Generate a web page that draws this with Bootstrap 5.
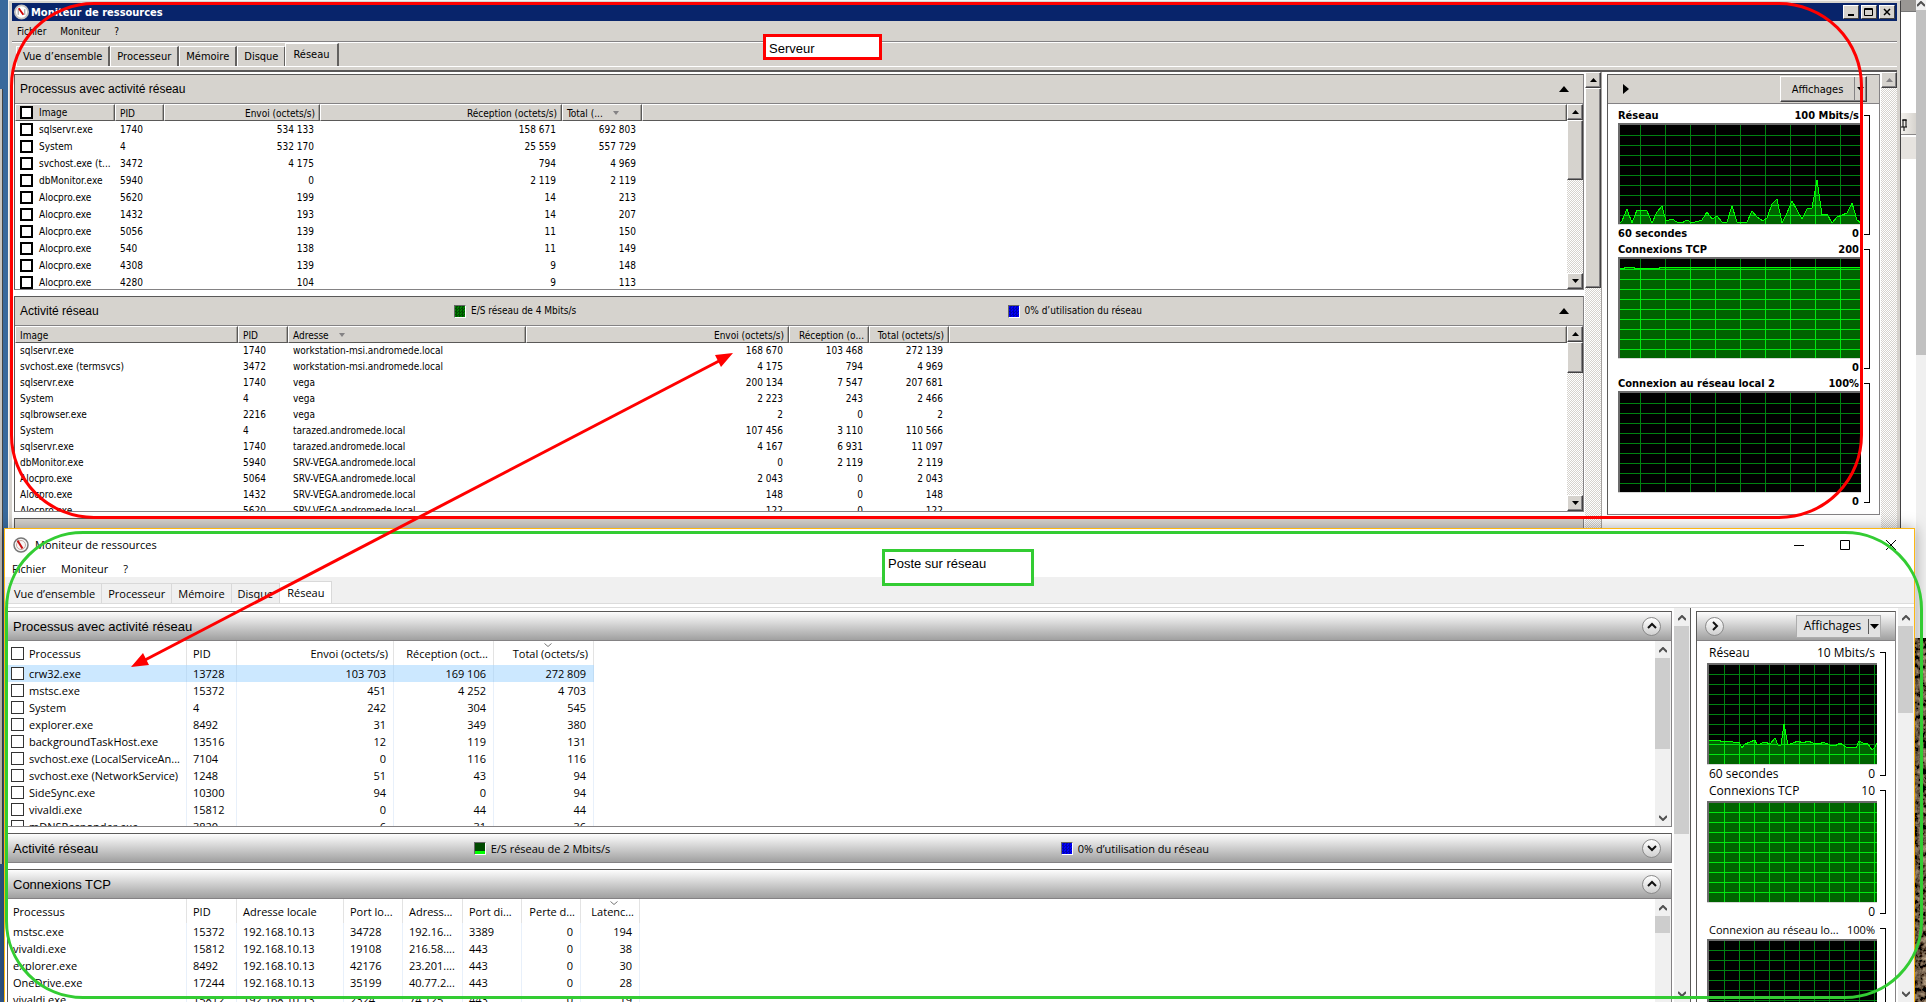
<!DOCTYPE html>
<html lang="fr">
<head>
<meta charset="utf-8">
<meta name="viewport" content="width=device-width, initial-scale=1">
<title>Moniteur de ressources</title>
<link href="https://cdn.jsdelivr.net/npm/bootstrap@5.3.0/dist/css/bootstrap.min.css" rel="stylesheet">
<style>
:root{--face:#d6d3ce;--dk:#424142;--md:#848284}
html,body{height:100%}
body{margin:0;overflow:hidden;line-height:1;color:#000;background:#fff}
button{font:inherit;color:inherit;padding:0;border:0;background:none;line-height:1}
a{color:#000;text-decoration:none}
svg{display:block}
.desk{min-height:100vh;overflow:hidden;background:linear-gradient(#39699c 0 528px,#31598c 528px)}
.deskedge{left:0;top:89px;width:3px;height:775px;background:#c8c5c0;border-right:1px solid #444}
.sidebar-bit{top:0;bottom:0;right:0;width:25px;background:#fff}
.sb-top{height:12px;background:#9a9794;width:15px;border-bottom:1px solid #777}
.sb-pin{top:113px;left:0;width:15px;height:22px;background:linear-gradient(90deg,#f4f2ee,#d6d3ce);border-bottom:1px solid #8a8888}
.sb-row{top:137px;left:0;width:15px;height:22px;background:#e6e3df}
.sb-bar{top:0;right:0;width:10px;height:638px;background:#f0f0f0}
.sb-bar svg{margin:1px 0 0 1px}
.sb-bar i{display:block;height:345px;margin-top:3px;background:#c1c1c1}
.photo{top:638px;bottom:0;right:0;width:12px;background:#2a1d13}
/* windows */
.w-srv{left:8px;right:25px;top:0;height:529px;background:var(--face);border:1px solid #f4f2ee;border-right-color:#424142;padding:2px 3px 0;font:10px/1 "DejaVu Sans Condensed","DejaVu Sans",sans-serif}
.w-cli{left:4px;right:11px;top:528px;bottom:0;background:#fff;border:1px solid #fdb813;border-bottom:0;font:11px/1 "Open Sans","Noto Sans",sans-serif;box-shadow:0 0 14px rgba(0,0,0,.35)}
.w-srv .ttl{height:18px;background:#08246b;color:#fff;font-weight:bold;font-size:11px;padding:0 2px 0 2px;gap:2px}
.w-srv .capbtn{width:16px;height:14px;background:var(--face);border:1px solid;border-color:#fff #424142 #424142 #fff}
.w-srv .menu{height:22px;padding-left:5px;gap:14px;border-bottom:1px solid #fff;box-shadow:inset 0 -1px var(--md)}
.w-srv .tabs{height:23px;padding-left:4px;font-size:11px}
.w-srv .tabs button{height:20px;padding:0 6px;border-left:1px solid #fff;border-top:1px solid #fff;border-right:2px solid #63615f}
.w-srv .tabs button.on{height:23px;padding:0 7px 2px;margin-left:-1px}
.w-srv .tabline{height:6px;border-top:1px solid #fff;border-bottom:2px solid #5a5858}
.w-cli .ttl{height:31px;padding-left:8px}
.w-cli .ttl span{padding-left:6px}
.w-cli .capbtn{width:46px;height:30px}
.w-cli .menu{height:17px;padding:0 0 0 7px;gap:15px;font-size:11px}
.w-cli .tabs{height:26px;background:#f0f0f0;padding-left:3px}
.w-cli .tabs button{height:20px;padding:0 6px;border:1px solid #d9d9d9;border-width:1px 1px 0 0}
.w-cli .tabs button.on{height:22px;padding:0 7px 1px;background:#fff}
.w-cli .tabline{height:5px;border:1px solid #dcdcdc;border-width:1px 0}
.cols{background:#fff;flex:1 1 0;min-height:0;overflow:hidden}
.w-srv .lists{padding:2px 1px 0 2px}
.w-cli .lists{padding:3px 2px 0 2px}
.lists{gap:6px;overflow:hidden}
.pane{border:1px solid;border-color:#5a5958 #848284 #848284 #5a5958;flex:none}
.hd{height:28px;font-family:"Liberation Sans",Arial,sans-serif}
.w-srv .hd{background:var(--face);font-size:12px}
.w-cli .hd{background:linear-gradient(#fdfdfd,#a0a0a0);font-size:13px}
.hd .nm{width:28%;padding-left:5px}
.hd .leg1{width:35.3%}
.hd .rnd{margin-right:10px}
.w-srv .leg{font:10px/1 "DejaVu Sans Condensed","DejaVu Sans",sans-serif;gap:5px}
.w-cli .leg{font:11px/1 "Open Sans",sans-serif;gap:5px}
.sq{width:12px;height:13px;border:1px solid #666;border-right-color:#fff;border-bottom-color:#fff;background:repeating-conic-gradient(#004a00 0 25%,#008000 0 50%) 0 0/3px 3px}
.sq.half{background:linear-gradient(#004a00 0 8px,#0f0 8px)}
.sq.blue{background:repeating-conic-gradient(#0000b0 0 25%,#0000ff 0 50%) 0 0/3px 3px}
.body-list{height:186px;border-top:1px solid #848284;overflow:hidden}
.holder{flex:1 1 0;min-width:0;overflow:hidden}
.grd{table-layout:fixed;width:100%;border-collapse:separate;border-spacing:0;white-space:nowrap}
.grd th,.grd td{overflow:hidden;padding:0;font-weight:normal}
.w-srv .grd th{height:17px;line-height:13px;padding:1px 4px 0 4px;background:var(--face);border:1px solid;border-color:#fff #5a5958 #5a5958 #fff;box-shadow:inset -1px 0 #a5a29c}
.w-srv .grd td{height:16px;line-height:16px;padding:0 6px 0 5px}
.w-srv .grd.tall th{height:16px}
.w-srv .grd.tall td{height:17px;line-height:17px}
.w-cli .grd th{height:24px;line-height:23px;padding:0 5px 0 6px;border-right:1px solid #e3e3e3}
.w-cli .grd td{height:17px;line-height:16px;padding:1px 7px 0 6px;border-right:1px solid #e8f0fa}
.w-cli .grd th:last-child,.w-cli .grd td:last-child{border-right:0}
.w-cli .grd .sel td:not(:last-child){background:#cce8ff;border-right-color:#bfdcf5}
.w-cli .grd th:first-child,.w-cli .grd td:first-child{padding-left:5px}
.w-cli .grd.ck th:first-child,.w-cli .grd.ck td:first-child{padding-left:3px;padding-right:0}
.w-cli .grd td.l{padding-right:2px}
.r{text-align:right}
.grd .ar{display:inline-block;border:3px solid transparent;border-top:4px solid #848284;border-bottom:0;margin:0 0 2px 10px}
.grd .chev{position:relative}
.grd .chev svg{position:absolute;top:2px;left:50%}
input[type=checkbox]{appearance:none;margin:0;background:#fff;display:inline-block;vertical-align:middle}
.w-srv input[type=checkbox]{width:13px;height:13px;border:2px solid #000;margin:0 6px 1px 0}
.w-cli input[type=checkbox]{width:13px;height:13px;border:1px solid #333;margin:1px 5px 0 0;vertical-align:top}
.w-cli th input[type=checkbox]{margin-top:5px}
/* scroll bars */
.sc{width:16px;flex:none}
.w-srv .sc{background:repeating-conic-gradient(#fff 0 25%,#d6d3ce 0 50%) 0 0/2px 2px}
.w-srv .sc button,.w-srv .sc .th{width:16px;background:var(--face);border:1px solid;border-color:#fff #424142 #424142 #fff;box-shadow:inset -1px -1px #848284}
.w-srv .sc button{height:16px}
.w-cli .sc{background:#f0f0f0}
.w-cli .sc button{height:17px;width:16px}
.w-cli .sc .th{background:#cdcdcd;width:15px}
.sc button,.capbtn,.rnd{display:flex;align-items:center;justify-content:center;flex:none}
.th-a{height:60px}.th-b{height:31px}.th-c{height:200px}
.th-d{height:91px}.th-e{height:17px}.th-f{height:208px}.th-g{height:87px}
.w-srv .main-sc{width:17px;border-right:1px solid #a5a2a0}
.w-cli .main-sc{width:17px;border-right:1px solid #5a5958}
.w-cli .edge{padding-top:1px}
/* charts */
.w-srv aside{width:279px;flex:none;padding:2px 1px 0 5px}
.w-cli aside{width:207px;flex:none;padding:3px 2px 0 5px}
.w-srv .views{width:87px;height:26px;border:1px solid;border-color:#fff #424142 #424142 #fff;box-shadow:inset -1px -1px #848284;background:var(--face);margin-right:12px;font:11px/1 "DejaVu Sans Condensed","DejaVu Sans",sans-serif}
.w-cli .views{width:85px;height:23px;border:1px solid #adadad;background:#e1e1e1;margin-right:14px;font:12px/1 "Open Sans",sans-serif}
.views .drop{width:12px;border-left:1px solid #848284}
.w-cli .views .drop{border-left:1px solid #5a5a5a;margin:3px 0}
.charts{border-top:1px solid #848284;padding:4px 9px 0 10px;white-space:nowrap}
.w-cli .charts{font-size:12px}
.w-cli .charts .long{font-size:11px}
.w-srv .charts{font-weight:bold;font-size:11px;height:411px}
.cap{height:15px;padding-right:2px}
.w-srv .foot{height:17px;padding-right:2px}
.w-cli .cap{height:18px;padding:0 2px 2px 2px}
.w-cli .foot{height:18px;padding:0 2px}
.brk{width:6px;margin:7px 0 7px 3px;border:1px solid #000;border-left:0;flex:none}
.rnd{width:19px;height:19px;border-radius:50%;border:1px solid #8a8a8a;background:linear-gradient(#fff,#d0d0d0)}
.w-srv .rnd{border:0;background:none}
/* annotations */
.ann{position:absolute;pointer-events:none;border:3px solid}
.ann-srv{left:10px;right:63px;top:2px;height:517px;border-color:#f00;border-radius:84px}
.ann-cli{left:5px;right:3px;top:531px;height:468px;border-color:#3c3;border-radius:78px}
.note{font:13px/1 "Liberation Sans",Arial,sans-serif;background:#fff;padding:5px 3px}
.note-srv{left:763px;top:34px;width:119px;height:26px;border-color:#f00}
.note-cli{left:882px;top:549px;width:152px;height:37px;border-color:#3c3}
.arrow{left:0;top:0;pointer-events:none}
</style>
</head>
<body>
<div class="desk position-relative">
  <div class="deskedge position-absolute"></div>
  <div class="sidebar-bit position-absolute">
    <div class="sb-top"></div>
    <div class="sb-pin position-absolute"><svg width="15" height="21"><path d="M0 14h6M2 14V7h3v7M1 7h5M3 14v4" stroke="#000" fill="none"/></svg></div>
    <div class="sb-row position-absolute"></div>
    <div class="sb-bar position-absolute"><svg width="8" height="6"><path d="M0 5l4-4 4 4" fill="none" stroke="#505050" stroke-width="2"/></svg><i></i></div>
  </div>
  <svg class="photo position-absolute" width="12" height="364"><filter id="grain"><feTurbulence type="fractalNoise" baseFrequency=".22" numOctaves="3" seed="4"/><feColorMatrix values="1 0 0 0 -.33  .75 0 0 0 -.26  .5 0 0 0 -.18  0 0 0 0 1"/></filter><rect width="12" height="364" filter="url(#grain)"/></svg>

  <!-- server window -->
  <section class="w-srv position-absolute d-flex flex-column" aria-label="Serveur">
    <div class="ttl d-flex align-items-center">
      <svg width="15" height="16" viewBox="0 0 16 16"><circle cx="8" cy="8" r="7" fill="#fff" stroke="#c8c5c0" stroke-width="2"/><path d="M4.500 11V5M11.500 11V5" stroke="#888"/><path d="M5 4l5 7" stroke="#d00000" stroke-width="2"/></svg>
      <span class="flex-grow-1">Moniteur de ressources</span>
      <button class="capbtn" aria-label="Réduire"><svg width="12" height="10"><path d="M3 8.0h6" stroke="#000" stroke-width="2"/></svg></button>
      <button class="capbtn" aria-label="Agrandir"><svg width="12" height="10"><path d="M1.500 1.500h8v7h-8zM1 2.500h9" stroke="#000" fill="none"/></svg></button>
      <button class="capbtn" aria-label="Fermer"><svg width="12" height="10"><path d="M3 2l6 6M9 2l-6 6" stroke="#000" stroke-width="1.500"/></svg></button>
    </div>
    <nav class="menu d-flex align-items-center"><a href="#">Fichier</a><a href="#">Moniteur</a><a href="#">?</a></nav>
    <div class="tabs d-flex align-items-end" role="tablist">
      <button role="tab">Vue d’ensemble</button><button role="tab">Processeur</button><button role="tab">Mémoire</button><button role="tab">Disque</button><button role="tab" class="on">Réseau</button>
    </div>
    <div class="tabline"></div>
    <div class="cols d-flex">
      <div class="lists flex-grow-1 d-flex flex-column">
        <div class="pane">
          <div class="hd d-flex align-items-center">
            <span class="nm">Processus avec activité réseau</span>
            <button class="rnd ms-auto" aria-label="Replier"><svg width="10" height="6"><path d="M5 0l5 6H0z"/></svg></button>
          </div>
          <div class="body-list d-flex">
            <div class="holder">
              <table class="grd tall">
                <colgroup><col width="100"><col width="49"><col width="156"><col width="242"><col width="80"><col></colgroup>
                <thead><tr><th><input type="checkbox" aria-label="Tout sélectionner">Image</th><th>PID</th><th class="r">Envoi (octets/s)</th><th class="r">Réception (octets/s)</th><th>Total (...<span class="ar"></span></th><th></th></tr></thead>
                <tbody>
                <tr><td><input type="checkbox" aria-label="sqlservr.exe">sqlservr.exe</td><td>1740</td><td class="r">534 133</td><td class="r">158 671</td><td class="r">692 803</td><td></td></tr>
                <tr><td><input type="checkbox" aria-label="System">System</td><td>4</td><td class="r">532 170</td><td class="r">25 559</td><td class="r">557 729</td><td></td></tr>
                <tr><td><input type="checkbox" aria-label="svchost.exe">svchost.exe (t...</td><td>3472</td><td class="r">4 175</td><td class="r">794</td><td class="r">4 969</td><td></td></tr>
                <tr><td><input type="checkbox" aria-label="dbMonitor.exe">dbMonitor.exe</td><td>5940</td><td class="r">0</td><td class="r">2 119</td><td class="r">2 119</td><td></td></tr>
                <tr><td><input type="checkbox" aria-label="Alocpro.exe">Alocpro.exe</td><td>5620</td><td class="r">199</td><td class="r">14</td><td class="r">213</td><td></td></tr>
                <tr><td><input type="checkbox" aria-label="Alocpro.exe">Alocpro.exe</td><td>1432</td><td class="r">193</td><td class="r">14</td><td class="r">207</td><td></td></tr>
                <tr><td><input type="checkbox" aria-label="Alocpro.exe">Alocpro.exe</td><td>5056</td><td class="r">139</td><td class="r">11</td><td class="r">150</td><td></td></tr>
                <tr><td><input type="checkbox" aria-label="Alocpro.exe">Alocpro.exe</td><td>540</td><td class="r">138</td><td class="r">11</td><td class="r">149</td><td></td></tr>
                <tr><td><input type="checkbox" aria-label="Alocpro.exe">Alocpro.exe</td><td>4308</td><td class="r">139</td><td class="r">9</td><td class="r">148</td><td></td></tr>
                <tr><td><input type="checkbox" aria-label="Alocpro.exe">Alocpro.exe</td><td>4280</td><td class="r">104</td><td class="r">9</td><td class="r">113</td><td></td></tr>
                </tbody>
              </table>
            </div>
            <div class="sc d-flex flex-column"><button aria-label="Haut"><svg width="7" height="4"><path d="M3.500 0L7 4H0z"/></svg></button><div class="th th-a"></div><button class="mt-auto" aria-label="Bas"><svg width="7" height="4"><path d="M3.500 4L7 0H0z"/></svg></button></div>
          </div>
        </div>
        <div class="pane">
          <div class="hd d-flex align-items-center">
            <span class="nm">Activité réseau</span>
            <span class="leg leg1 d-flex align-items-center"><i class="sq"></i>E/S réseau de 4 Mbits/s</span>
            <span class="leg d-flex align-items-center"><i class="sq blue"></i>0% d’utilisation du réseau</span>
            <button class="rnd ms-auto" aria-label="Replier"><svg width="10" height="6"><path d="M5 0l5 6H0z"/></svg></button>
          </div>
          <div class="body-list d-flex">
            <div class="holder">
              <table class="grd">
                <colgroup><col width="223"><col width="50"><col width="238"><col width="263"><col width="80"><col width="80"><col></colgroup>
                <thead><tr><th>Image</th><th>PID</th><th>Adresse<span class="ar"></span></th><th class="r">Envoi (octets/s)</th><th class="r">Réception (o...</th><th class="r">Total (octets/s)</th><th></th></tr></thead>
                <tbody>
                <tr><td>sqlservr.exe</td><td>1740</td><td>workstation-msi.andromede.local</td><td class="r">168 670</td><td class="r">103 468</td><td class="r">272 139</td><td></td></tr>
                <tr><td>svchost.exe (termsvcs)</td><td>3472</td><td>workstation-msi.andromede.local</td><td class="r">4 175</td><td class="r">794</td><td class="r">4 969</td><td></td></tr>
                <tr><td>sqlservr.exe</td><td>1740</td><td>vega</td><td class="r">200 134</td><td class="r">7 547</td><td class="r">207 681</td><td></td></tr>
                <tr><td>System</td><td>4</td><td>vega</td><td class="r">2 223</td><td class="r">243</td><td class="r">2 466</td><td></td></tr>
                <tr><td>sqlbrowser.exe</td><td>2216</td><td>vega</td><td class="r">2</td><td class="r">0</td><td class="r">2</td><td></td></tr>
                <tr><td>System</td><td>4</td><td>tarazed.andromede.local</td><td class="r">107 456</td><td class="r">3 110</td><td class="r">110 566</td><td></td></tr>
                <tr><td>sqlservr.exe</td><td>1740</td><td>tarazed.andromede.local</td><td class="r">4 167</td><td class="r">6 931</td><td class="r">11 097</td><td></td></tr>
                <tr><td>dbMonitor.exe</td><td>5940</td><td>SRV-VEGA.andromede.local</td><td class="r">0</td><td class="r">2 119</td><td class="r">2 119</td><td></td></tr>
                <tr><td>Alocpro.exe</td><td>5064</td><td>SRV-VEGA.andromede.local</td><td class="r">2 043</td><td class="r">0</td><td class="r">2 043</td><td></td></tr>
                <tr><td>Alocpro.exe</td><td>1432</td><td>SRV-VEGA.andromede.local</td><td class="r">148</td><td class="r">0</td><td class="r">148</td><td></td></tr>
                <tr><td>Alocpro.exe</td><td>5620</td><td>SRV-VEGA.andromede.local</td><td class="r">122</td><td class="r">0</td><td class="r">122</td><td></td></tr>
                </tbody>
              </table>
            </div>
            <div class="sc d-flex flex-column"><button aria-label="Haut"><svg width="7" height="4"><path d="M3.500 0L7 4H0z"/></svg></button><div class="th th-b"></div><button class="mt-auto" aria-label="Bas"><svg width="7" height="4"><path d="M3.500 4L7 0H0z"/></svg></button></div>
          </div>
        </div>
        <div class="pane"><div class="hd"></div></div>
      </div>
      <div class="sc main-sc d-flex flex-column"><button aria-label="Haut"><svg width="7" height="4"><path d="M3.500 0L7 4H0z"/></svg></button><div class="th th-c"></div></div>
      <aside>
        <div class="pane">
          <div class="hd d-flex align-items-center">
            <button class="rnd ms-2" aria-label="Masquer"><svg width="6" height="10"><path d="M0 0l6 5-6 5z"/></svg></button>
            <button class="views ms-auto d-flex align-items-stretch"><span class="flex-grow-1 align-self-center">Affichages</span><span class="drop d-flex align-items-center justify-content-center"><svg width="7" height="4"><path d="M3.500 4L7 0H0z"/></svg></span></button>
          </div>
          <div class="charts">
            <div class="d-flex"><div class="flex-grow-1"><div class="cap d-flex align-items-center justify-content-between"><span>Réseau</span><span>100 Mbits/s</span></div><div data-chart="srv-net"></div><div class="foot d-flex align-items-center justify-content-between"><span>60 secondes</span><span>0</span></div></div><div class="brk"></div></div>
            <div class="d-flex"><div class="flex-grow-1"><div class="cap d-flex align-items-center justify-content-between"><span>Connexions TCP</span><span>200</span></div><div data-chart="srv-tcp"></div><div class="foot d-flex align-items-center justify-content-end"><span>0</span></div></div><div class="brk"></div></div>
            <div class="d-flex"><div class="flex-grow-1"><div class="cap d-flex align-items-center justify-content-between"><span>Connexion au réseau local 2</span><span>100%</span></div><div data-chart="srv-lan"></div><div class="foot d-flex align-items-center justify-content-end"><span>0</span></div></div><div class="brk"></div></div>
          </div>
        </div>
      </aside>
      <div class="sc d-flex flex-column"><button disabled aria-label="Haut"><svg width="7" height="4"><path d="M3.500 0L7 4H0z" fill="#848284"/></svg></button></div>
    </div>
  </section>

  <!-- client window -->
  <section class="w-cli position-absolute d-flex flex-column overflow-hidden" aria-label="Poste sur réseau">
    <div class="ttl d-flex align-items-center">
      <svg width="16" height="16" viewBox="0 0 16 16"><circle cx="8" cy="8" r="7" fill="#f6f6f6" stroke="#777" stroke-width="1.500"/><circle cx="8" cy="8" r="4.500" fill="none" stroke="#c9a9a0"/><path d="M4.500 3.500l5 8" stroke="#c81010" stroke-width="2"/></svg>
      <span class="flex-grow-1">Moniteur de ressources</span>
      <button class="capbtn" aria-label="Réduire"><svg width="10" height="10"><path d="M0 5.500h10" stroke="#000"/></svg></button>
      <button class="capbtn" aria-label="Agrandir"><svg width="10" height="10"><path d="M.5.500h9v9h-9z" stroke="#000" fill="none"/></svg></button>
      <button class="capbtn" aria-label="Fermer"><svg width="10" height="10"><path d="M0 0l10 10M10 0L0 10" stroke="#000"/></svg></button>
    </div>
    <nav class="menu d-flex align-items-center"><a href="#">Fichier</a><a href="#">Moniteur</a><a href="#">?</a></nav>
    <div class="tabs d-flex align-items-end" role="tablist">
      <button role="tab">Vue d’ensemble</button><button role="tab">Processeur</button><button role="tab">Mémoire</button><button role="tab">Disque</button><button role="tab" class="on">Réseau</button>
    </div>
    <div class="tabline"></div>
    <div class="cols d-flex">
      <div class="lists flex-grow-1 d-flex flex-column">
        <div class="pane">
          <div class="hd d-flex align-items-center">
            <span class="nm">Processus avec activité réseau</span>
            <button class="rnd ms-auto" aria-label="Replier"><svg width="10" height="8"><path d="M1 6l4-4 4 4" fill="none" stroke="#111" stroke-width="2"/></svg></button>
          </div>
          <div class="body-list d-flex">
            <div class="holder">
              <table class="grd ck">
                <colgroup><col width="179"><col width="50"><col width="157"><col width="100"><col width="100"><col></colgroup>
                <thead><tr><th><input type="checkbox" aria-label="Tout sélectionner">Processus</th><th>PID</th><th class="r">Envoi (octets/s)</th><th class="r">Réception (oct...</th><th class="r chev">Total (octets/s)<svg width="8" height="5"><path d="M.5.500l3.500 3 3.500-3" fill="none" stroke="#777"/></svg></th><th></th></tr></thead>
                <tbody>
                <tr class="sel"><td><input type="checkbox" aria-label="crw32.exe">crw32.exe</td><td>13728</td><td class="r">103 703</td><td class="r">169 106</td><td class="r">272 809</td><td></td></tr>
                <tr><td><input type="checkbox" aria-label="mstsc.exe">mstsc.exe</td><td>15372</td><td class="r">451</td><td class="r">4 252</td><td class="r">4 703</td><td></td></tr>
                <tr><td><input type="checkbox" aria-label="System">System</td><td>4</td><td class="r">242</td><td class="r">304</td><td class="r">545</td><td></td></tr>
                <tr><td><input type="checkbox" aria-label="explorer.exe">explorer.exe</td><td>8492</td><td class="r">31</td><td class="r">349</td><td class="r">380</td><td></td></tr>
                <tr><td><input type="checkbox" aria-label="backgroundTaskHost.exe">backgroundTaskHost.exe</td><td>13516</td><td class="r">12</td><td class="r">119</td><td class="r">131</td><td></td></tr>
                <tr><td><input type="checkbox" aria-label="svchost.exe">svchost.exe (LocalServiceAn...</td><td>7104</td><td class="r">0</td><td class="r">116</td><td class="r">116</td><td></td></tr>
                <tr><td><input type="checkbox" aria-label="svchost.exe">svchost.exe (NetworkService)</td><td>1248</td><td class="r">51</td><td class="r">43</td><td class="r">94</td><td></td></tr>
                <tr><td><input type="checkbox" aria-label="SideSync.exe">SideSync.exe</td><td>10300</td><td class="r">94</td><td class="r">0</td><td class="r">94</td><td></td></tr>
                <tr><td><input type="checkbox" aria-label="vivaldi.exe">vivaldi.exe</td><td>15812</td><td class="r">0</td><td class="r">44</td><td class="r">44</td><td></td></tr>
                <tr><td><input type="checkbox" aria-label="mDNSResponder.exe">mDNSResponder.exe</td><td>3820</td><td class="r">6</td><td class="r">31</td><td class="r">36</td><td></td></tr>
                </tbody>
              </table>
            </div>
            <div class="sc d-flex flex-column"><button aria-label="Haut"><svg width="8" height="6"><path d="M0 5l4-4 4 4" fill="none" stroke="#505050" stroke-width="2"/></svg></button><div class="th th-d"></div><button class="mt-auto" aria-label="Bas"><svg width="8" height="6"><path d="M0 1l4 4 4-4" fill="none" stroke="#505050" stroke-width="2"/></svg></button></div>
          </div>
        </div>
        <div class="pane">
          <div class="hd d-flex align-items-center">
            <span class="nm">Activité réseau</span>
            <span class="leg leg1 d-flex align-items-center"><i class="sq half"></i>E/S réseau de 2 Mbits/s</span>
            <span class="leg d-flex align-items-center"><i class="sq blue"></i>0% d’utilisation du réseau</span>
            <button class="rnd ms-auto" aria-label="Déplier"><svg width="10" height="8"><path d="M1 2l4 4 4-4" fill="none" stroke="#111" stroke-width="2"/></svg></button>
          </div>
        </div>
        <div class="pane">
          <div class="hd d-flex align-items-center">
            <span class="nm">Connexions TCP</span>
            <button class="rnd ms-auto" aria-label="Replier"><svg width="10" height="8"><path d="M1 6l4-4 4 4" fill="none" stroke="#111" stroke-width="2"/></svg></button>
          </div>
          <div class="body-list d-flex">
            <div class="holder">
              <table class="grd">
                <colgroup><col width="179"><col width="50"><col width="107"><col width="59"><col width="60"><col width="59"><col width="59"><col width="59"><col></colgroup>
                <thead><tr><th>Processus</th><th>PID</th><th>Adresse locale</th><th>Port lo...</th><th>Adress...</th><th>Port di...</th><th class="r">Perte d...</th><th class="r chev">Latenc...<svg width="8" height="5"><path d="M.5.500l3.500 3 3.500-3" fill="none" stroke="#777"/></svg></th><th></th></tr></thead>
                <tbody>
                <tr><td>mstsc.exe</td><td>15372</td><td>192.168.10.13</td><td>34728</td><td class="l">192.16...</td><td>3389</td><td class="r">0</td><td class="r">194</td><td></td></tr>
                <tr><td>vivaldi.exe</td><td>15812</td><td>192.168.10.13</td><td>19108</td><td class="l">216.58....</td><td>443</td><td class="r">0</td><td class="r">38</td><td></td></tr>
                <tr><td>explorer.exe</td><td>8492</td><td>192.168.10.13</td><td>42176</td><td class="l">23.201....</td><td>443</td><td class="r">0</td><td class="r">30</td><td></td></tr>
                <tr><td>OneDrive.exe</td><td>17244</td><td>192.168.10.13</td><td>35199</td><td class="l">40.77.2...</td><td>443</td><td class="r">0</td><td class="r">28</td><td></td></tr>
                <tr><td>vivaldi.exe</td><td>15812</td><td>192.168.10.13</td><td>2324</td><td class="l">74.125....</td><td>443</td><td class="r">0</td><td class="r">19</td><td></td></tr>
                </tbody>
              </table>
            </div>
            <div class="sc d-flex flex-column"><button aria-label="Haut"><svg width="8" height="6"><path d="M0 5l4-4 4 4" fill="none" stroke="#505050" stroke-width="2"/></svg></button><div class="th th-e"></div></div>
          </div>
        </div>
      </div>
      <div class="sc main-sc edge d-flex flex-column"><button aria-label="Haut"><svg width="8" height="6"><path d="M0 5l4-4 4 4" fill="none" stroke="#505050" stroke-width="2"/></svg></button><div class="th th-f"></div><button class="mt-auto" aria-label="Bas"><svg width="8" height="6"><path d="M0 1l4 4 4-4" fill="none" stroke="#505050" stroke-width="2"/></svg></button></div>
      <aside>
        <div class="pane">
          <div class="hd d-flex align-items-center">
            <button class="rnd ms-2" aria-label="Masquer"><svg width="8" height="10"><path d="M2 1l4 4-4 4" fill="none" stroke="#111" stroke-width="2"/></svg></button>
            <button class="views ms-auto d-flex align-items-stretch"><span class="flex-grow-1 align-self-center">Affichages</span><span class="drop d-flex align-items-center justify-content-center"><svg width="9" height="5"><path d="M4.500 5L9 0H0z"/></svg></span></button>
          </div>
          <div class="charts">
            <div class="d-flex"><div class="flex-grow-1"><div class="cap d-flex align-items-center justify-content-between"><span>Réseau</span><span>10 Mbits/s</span></div><div data-chart="cli-net"></div><div class="foot d-flex align-items-center justify-content-between"><span>60 secondes</span><span>0</span></div></div><div class="brk"></div></div>
            <div class="d-flex"><div class="flex-grow-1"><div class="cap d-flex align-items-center justify-content-between"><span>Connexions TCP</span><span>10</span></div><div data-chart="cli-tcp"></div><div class="foot d-flex align-items-center justify-content-end"><span>0</span></div></div><div class="brk"></div></div>
            <div class="d-flex"><div class="flex-grow-1"><div class="cap long d-flex align-items-center justify-content-between"><span>Connexion au réseau lo...</span><span>100%</span></div><div data-chart="cli-lan"></div><div class="foot d-flex align-items-center justify-content-end"><span>0</span></div></div><div class="brk"></div></div>
          </div>
        </div>
      </aside>
      <div class="sc edge d-flex flex-column"><button aria-label="Haut"><svg width="8" height="6"><path d="M0 5l4-4 4 4" fill="none" stroke="#505050" stroke-width="2"/></svg></button><div class="th th-g"></div><button class="mt-auto" aria-label="Bas"><svg width="8" height="6"><path d="M0 1l4 4 4-4" fill="none" stroke="#505050" stroke-width="2"/></svg></button></div>
    </div>
  </section>

  <!-- annotations over both windows -->
  <div class="ann ann-srv"></div>
  <div class="ann ann-cli"></div>
  <div class="ann note note-srv">Serveur</div>
  <div class="ann note note-cli">Poste sur réseau</div>
  <svg class="arrow position-absolute" width="740" height="680"><path d="M145 660L719 361" stroke="#f00" stroke-width="3"/><path d="M733 353L721 367 715 355zM131 667L149 665 143 653z" fill="#f00"/></svg>
</div>
<script>
// Each chart: width, first vertical line, column step, first horizontal line, curve points
const charts = {
  'srv-net': [243,22,25,12,'2,100 4,98 9,86 14,100 19,87 29,88 34,100 39,89 44,83 48,98 54,96 59,99 64,100 69,97 74,100 84,97 89,89 94,96 99,93 104,99 109,99 114,83 119,99 129,99 134,88 139,94 145,98 149,95 154,81 159,76 164,100 169,90 174,78 179,87 184,96 189,86 194,85 199,57 204,92 209,91 214,100 219,94 229,90 234,80 239,97 243,100'],
  'srv-tcp': [243,22,25,12,'2,11 6,11 6,10 16,10 16,11 41,11 41,10 243,10'],
  'srv-lan': [243,22,25,12,''],
  'cli-net': [170,17,15,11,'2,78 6,77 11,77 16,79 21,78 26,79 32,79 35,85 38,81 43,79 48,77 50,82 58,79 63,81 68,75 71,82 74,82 77,61 81,82 86,80 91,78 96,80 101,78 106,80 113,81 116,79 123,82 128,83 133,80 139,84 149,85 152,78 156,80 161,81 165,87 168,84 170,80'],
  'cli-tcp': [170,17,15,11,'2,1 170,1'],
  'cli-lan': [170,17,15,11,'']
};
document.querySelectorAll('[data-chart]').forEach(el => {
  const id = el.dataset.chart, [w, x0, dx, y0, pts] = charts[id];
  let d = '';
  for (let x = x0; x < w; x += dx) d += `M${x}.5 2V101`;
  for (let y = y0; y < 101; y += 10) d += `M2 ${y}.5H${w}`;
  let s = `<rect width="${w}" height="102" fill="#000"/><path d="${d}" stroke="#008211" fill="none"/>`;
  if (pts) s += `<clipPath id="c-${id}"><polygon points="2,102 ${pts} ${w},102"/></clipPath>
    <g clip-path="url(#c-${id})"><rect width="${w}" height="102" fill="#006300"/><path d="${d}" stroke="#00e610" fill="none"/></g>
    <polyline points="${pts}" fill="none" stroke="#00ff00"/>`;
  s += `<path d="M1 102V1H${w}" fill="none" stroke="#6b6b6b" stroke-width="2"/><path d="M0 101.500H${w}" stroke="#d8d8d8"/>`;
  el.innerHTML = `<svg width="100%" height="102" viewBox="0 0 ${w} 102" preserveAspectRatio="none" shape-rendering="crispEdges">${s}</svg>`;
});
</script>
<script src="https://cdn.jsdelivr.net/npm/bootstrap@5.3.0/dist/js/bootstrap.bundle.min.js"></script>
</body>
</html>
